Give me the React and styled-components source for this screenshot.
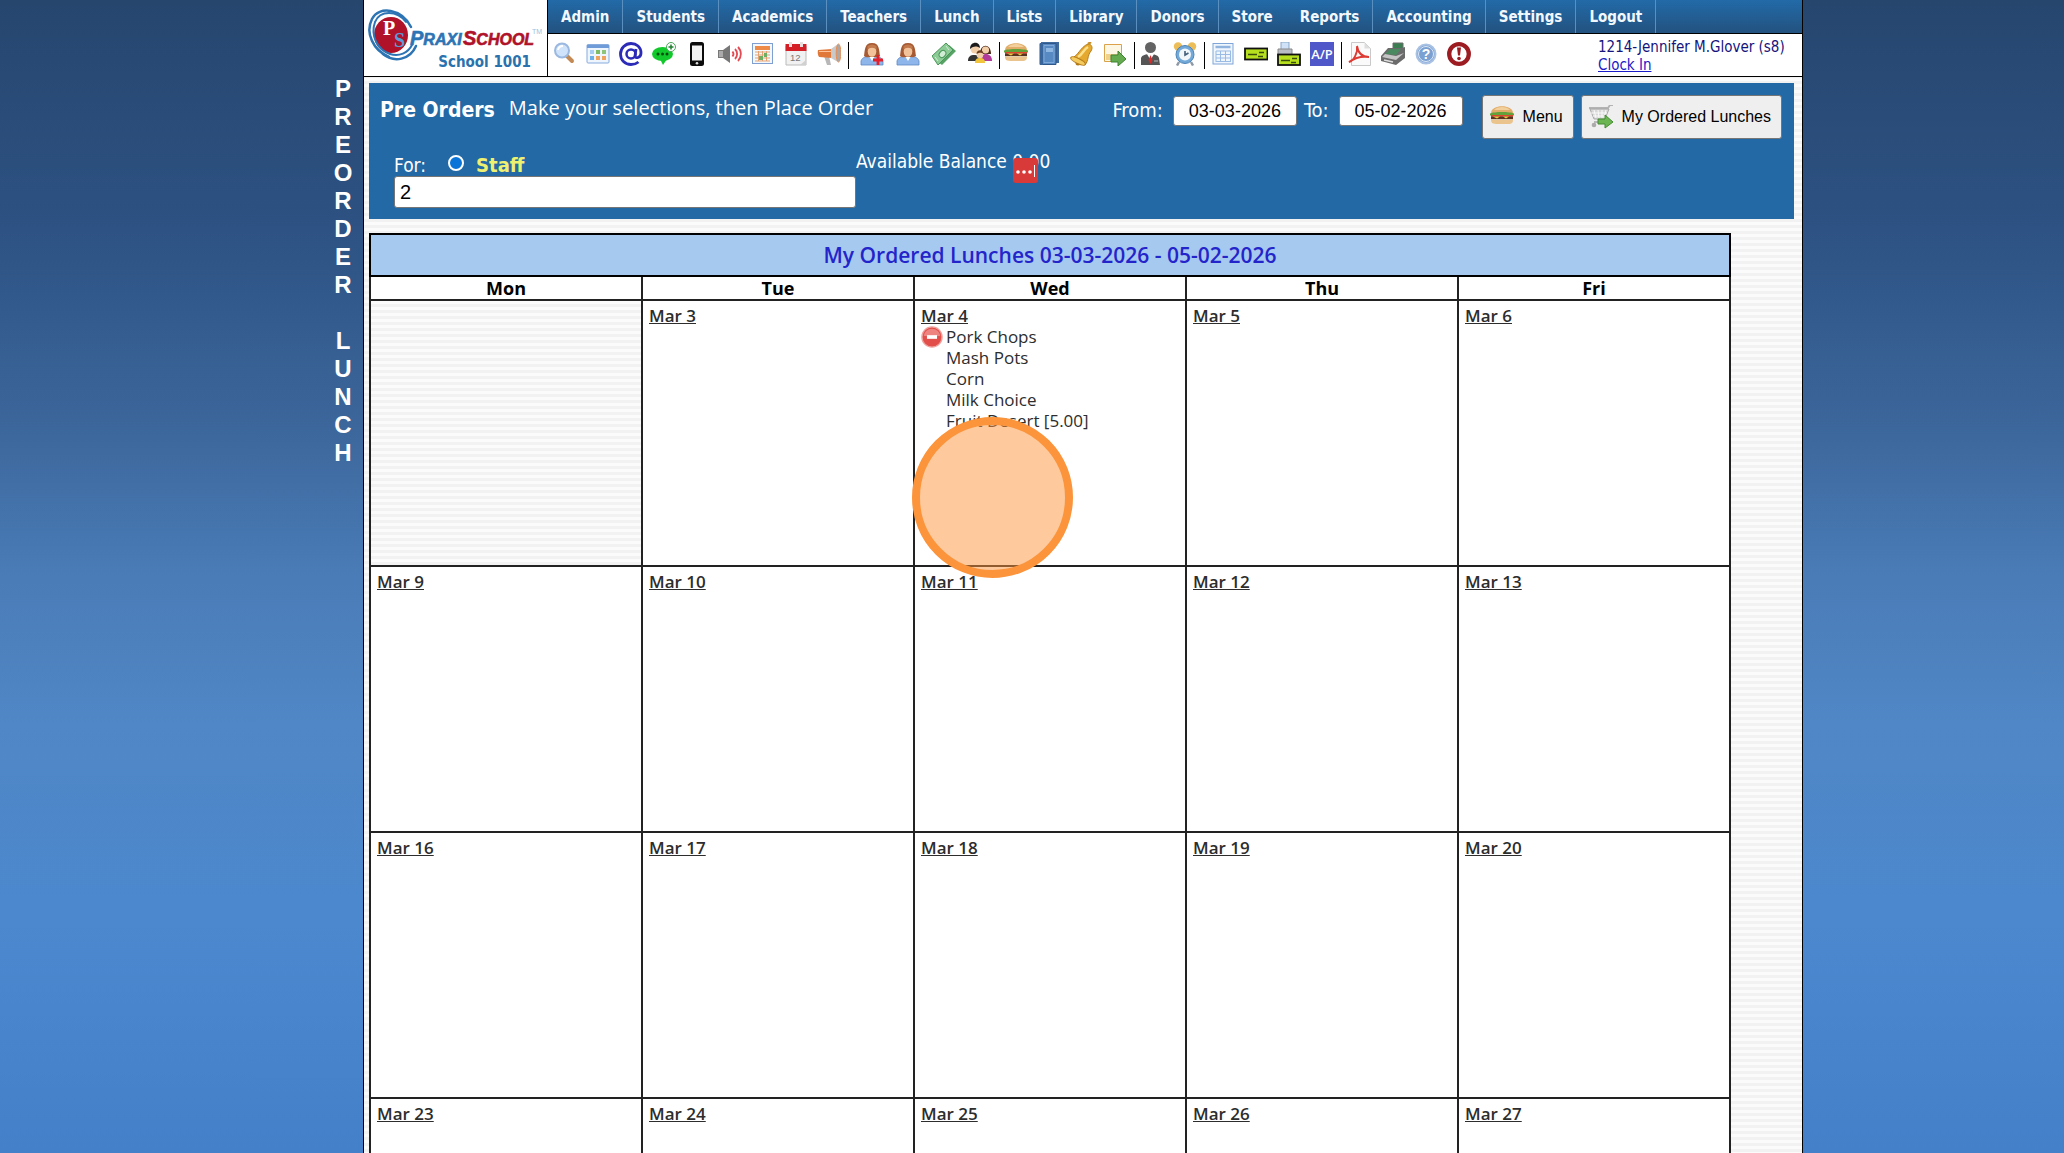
import styled, { createGlobalStyle, css } from "styled-components";

const tahoma = `"DejaVu Sans Condensed", Tahoma, sans-serif`;
const trebuchet = `"Open Sans", "Trebuchet MS", sans-serif`;
const arial = `"Liberation Sans", Arial, sans-serif`;

const stripes = css`
  background: repeating-linear-gradient(#fbfbfb 0 3px, #f2f2f2 3px 6px);
`;

const GlobalStyle = createGlobalStyle`
  *, *::before, *::after {
    box-sizing: border-box;
  }
  body {
    margin: 0;
    font-family: ${tahoma};
    color: #000;
  }
`;

const Backdrop = styled.div`
  height: 100vh;
  overflow-y: auto;
  scrollbar-width: none;
  background: linear-gradient(
    #26466e 0%,
    #2d5283 20%,
    #3d689d 38%,
    #4a7cb7 50%,
    #5087c6 63%,
    #4b88ce 80%,
    #4480c9 100%
  );
`;

const Shell = styled.div`
  display: flex;
  justify-content: center;
  max-width: 1542px;
  margin: 0 auto;
`;

const SideTitle = styled.h1`
  display: flex;
  flex: 0 0 102px;
  flex-direction: column;
  align-items: flex-end;
  margin: 0;
  padding: 75px 8px 0 0;
  font: bold 24px/28px ${arial};
  color: #fff;
`;

const Letter = styled.span`
  width: 24px;
  height: 28px;
  text-align: center;
`;

const Page = styled.div`
  flex: 1;
  min-width: 0;
  min-height: 100vh;
  border: solid #000;
  border-width: 0 1px;
  ${stripes}
`;

const Header = styled.header`
  display: flex;
  height: 77px;
  background: #fff;
  border-bottom: 1px solid #000;
`;

const Brand = styled.div`
  flex: 0 0 184px;
  padding: 8px 0 0 4px;
  border-right: 1px solid #000;
`;

const SchoolName = styled.div`
  padding-right: 16px;
  font: bold 15px/16px ${tahoma};
  color: #2a72ae;
  text-align: right;
`;

const HeaderMain = styled.div`
  flex: 1;
  min-width: 0;
`;

const Nav = styled.nav`
  display: flex;
  height: 34px;
  background: linear-gradient(#226aa8, #23527f);
  border-bottom: 1px solid #000;
`;

const NavItem = styled.a`
  padding: 0 13px;
  border-right: 1px solid ${(p) => (p.$open ? "transparent" : "#5b8fbf")};
  font: bold 15px/34px ${tahoma};
  color: #f2f8fd;
  text-decoration: none;
`;

const Toolbar = styled.div`
  display: flex;
  align-items: flex-start;
  height: 42px;
  padding: 8px 20px 0 0;
`;

const ToolGroup = styled.div`
  display: flex;
  gap: ${(p) => p.$gap || 9}px;
  height: 27px;
  padding: 0 7px 0 ${(p) => p.$lead || 6}px;
  border-right: 1px solid ${(p) => (p.$last ? "transparent" : "#000")};
`;

const ToolButton = styled.button`
  width: 24px;
  height: 24px;
  padding: 0;
  border: 0;
  background: none;

  svg {
    display: block;
  }
`;

const User = styled.div`
  margin-left: auto;
  width: 184px;
  margin-top: -4px;
  font: 15px/18px ${tahoma};
  color: #14147e;
  white-space: nowrap;
`;

const ClockIn = styled.a`
  color: #1a1ac8;
`;

const OrderPanel = styled.section`
  margin: 6px 8px 14px 5px;
  padding: 12px 12px 11px 11px;
  background: #2269a5;
  color: #fff;
`;

const PanelTop = styled.div`
  display: flex;
  align-items: flex-start;
  height: 56px;
`;

const PanelTitle = styled.h2`
  margin: 0 14px 0 0;
  font: bold 21px/30px ${tahoma};
`;

const Hint = styled.span`
  font: 20px/26px ${trebuchet};
`;

const Filters = styled.div`
  display: flex;
  margin-left: auto;
  gap: 7px;
  font: 20px/30px ${tahoma};

  label {
    display: flex;
    gap: 10px;
  }
`;

const DateInput = styled.input`
  width: 124px;
  height: 30px;
  margin-top: 1px;
  padding: 0;
  border: 1px solid #767676;
  border-radius: 3px;
  background: #fff;
  font: 18px ${arial};
  color: #000;
  text-align: center;
`;

const Actions = styled.div`
  display: flex;
  gap: 7px;
  margin-left: 19px;
`;

const ActionButton = styled.button`
  display: flex;
  align-items: center;
  gap: 9px;
  height: 44px;
  padding: 0 10px 0 7px;
  border: 1px solid #767676;
  border-radius: 3px;
  background: #efefef;
  font: 16px ${arial};
  color: #000;
`;

const PanelBottom = styled.div`
  display: flex;
  align-items: flex-start;
  padding-left: 14px;
`;

const Person = styled.div`
  width: 462px;
`;

const PersonType = styled.div`
  display: flex;
  align-items: flex-end;
  height: 25px;
  font: 19px/21px ${tahoma};
`;

const StaffRadio = styled.input`
  appearance: none;
  width: 16px;
  height: 16px;
  margin: 0 12px 5px 22px;
  border: 2px solid #fff;
  border-radius: 50%;
  background: #0a74d8;
`;

const StaffLabel = styled.label`
  font: bold 20px/21px ${tahoma};
  color: #eef070;
`;

const PersonInput = styled.input`
  display: block;
  width: 100%;
  height: 32px;
  padding: 0 5px;
  border: 1px solid #767676;
  border-radius: 3px;
  background: #fff;
  font: 20px ${arial};
  color: #000;
`;

const Balance = styled.div`
  position: relative;
  font: 19px/20px ${tahoma};
`;

const Badge = styled.span`
  position: absolute;
  right: 12px;
  top: 7px;
  display: flex;
  align-items: center;
  justify-content: center;
  width: 25px;
  height: 25px;
  border-radius: 3px;
  background: #d83a3a;
`;

const Calendar = styled.table`
  width: calc(100% - 76px);
  margin-left: 5px;
  border-collapse: collapse;
  table-layout: fixed;
  border: 2px solid #000;
`;

const Caption = styled.th`
  height: 42px;
  padding: 0;
  border-bottom: 2px solid #000;
  background: #a6c9ef;
  font: 600 21px/38px ${trebuchet};
  color: #2424cb;
`;

const Weekday = styled.th`
  height: 24px;
  padding: 0;
  border: 2px solid #222;
  background: #fff;
  font: bold 18px/20px ${trebuchet};
`;

const Day = styled.td`
  position: relative;
  height: 266px;
  padding: 4px 6px;
  border: 2px solid #222;
  vertical-align: top;
  font: 17px/21px ${trebuchet};
  color: #2d2d2d;
  ${(p) => (p.$blank ? stripes : "background: #fff;")}
`;

const DayLink = styled.a`
  display: block;
  width: fit-content;
  font-weight: 600;
  color: #2d2d2d;
`;

const Order = styled.div`
  display: flex;
  gap: 3px;
`;

const RemoveButton = styled.button`
  width: 22px;
  height: 22px;
  padding: 0;
  border: 0;
  background: none;
`;

const Dishes = styled.ul`
  margin: 0;
  padding: 0;
  list-style: none;
`;

const ClickMarker = styled.div`
  position: absolute;
  z-index: 1;
  left: -3px;
  top: 116px;
  width: 161px;
  height: 161px;
  border: 8px solid #fb943b;
  border-radius: 50%;
  background: rgba(251, 148, 59, 0.5);
`;

/* ---------- icons ---------- */

const Icon = ({ size = 24, children }) => (
  <svg width={size} height={size} viewBox="0 0 24 24" fill="none" aria-hidden="true">
    {children}
  </svg>
);

const SearchIcon = () => (
  <Icon>
    <path d="M14 14l5 5" stroke="#c48a56" strokeWidth="4" strokeLinecap="round" />
    <circle cx="9" cy="8.500" r="7" fill="#cfe3fa" stroke="#9bb9e0" strokeWidth="2" />
    <path d="M5 8a5 5 0 0 1 5-4" stroke="#fff" strokeWidth="2" />
  </Icon>
);

const AppsIcon = () => (
  <Icon>
    <rect x="1" y="2.500" width="22" height="18.500" rx="1" fill="#eef5fd" stroke="#86abdc" />
    <path d="M1 3h22v3H1z" fill="#6f9bd8" />
    <path d="M4 8h4v4H4z" fill="#a8cdf0" />
    <path d="M10 8h4v4h-4zM10 14h4v4h-4z" fill="#7dbb67" />
    <path d="M16 8h4v4h-4z" fill="#8fc57b" />
    <path d="M4 14h4v4H4z" fill="#6eaee6" />
    <path d="M10 14h4v4h-4zM16 14h4v4h-4z" fill="#f0a35c" />
  </Icon>
);

const AtIcon = () => (
  <Icon>
    <circle cx="12" cy="12" r="4.500" stroke="#2b2bb8" strokeWidth="2.500" />
    <path
      d="M17 7l-1 7c0 3 6 2 6-3C22 5 17.500 1.500 12 1.500S1.500 6 1.500 12 6 22.500 12 22.500c3 0 5.500-.8 7.500-2.500"
      stroke="#2b2bb8"
      strokeWidth="2.800"
    />
  </Icon>
);

const ChatIcon = () => (
  <Icon>
    <ellipse cx="10.500" cy="12" rx="10.500" ry="7" fill="#12c92c" />
    <path d="M8 17h7l-4 6z" fill="#12c92c" />
    <circle cx="6" cy="12" r="1.500" fill="#064d10" />
    <circle cx="10.500" cy="12" r="1.500" fill="#064d10" />
    <circle cx="15" cy="12" r="1.500" fill="#064d10" />
    <circle cx="19" cy="5" r="4.500" fill="#fff" stroke="#4aa65a" />
    <path d="M19 2.500v5M16.500 5h5" stroke="#1d7f2f" strokeWidth="1.500" />
  </Icon>
);

const PhoneIcon = () => (
  <Icon>
    <rect x="5" y="0" width="14" height="24" rx="2.500" fill="#0c0c0c" />
    <rect x="7" y="3.500" width="10" height="15" fill="#f3f3f3" />
    <circle cx="12" cy="21.300" r="1.300" fill="#ddd" />
  </Icon>
);

const SpeakerIcon = () => (
  <Icon>
    <path d="M0 8h5l7-5v18l-7-5H0z" fill="#777" />
    <path d="M1 9h4v6H1z" fill="#aaa" />
    <path d="M14.500 9.500a4 4 0 0 1 0 5M17 7a7 7 0 0 1 0 10M20 5a10 10 0 0 1 0 14" stroke="#e34a52" strokeWidth="1.800" />
  </Icon>
);

const ScheduleIcon = () => (
  <Icon>
    <rect x="1.500" y="1.500" width="20" height="20" fill="#f4f8fd" stroke="#7f9fd0" />
    <path d="M4 4h15v4H4z" fill="#ef8b49" />
    <path d="M4 10h15M4 13h15M4 16h15M4 19h15M7.500 9v10M11.500 9v10M15.500 9v10" stroke="#e3a26f" />
    <path d="M8 14h4v4H8zM13 11h3v4h-3z" fill="#6fae62" />
  </Icon>
);

const DateIcon = () => (
  <Icon>
    <path d="M2 4h20v19H2z" fill="#f1f1f1" stroke="#bbb" />
    <path d="M1.500 2h21v7h-21z" fill="#d51f26" />
    <path d="M5 0h3v5H5zM16 0h3v5h-3z" fill="#e8dede" />
    <text x="6" y="19" fontFamily="Liberation Sans" fontSize="9.500" fill="#777">12</text>
    <path d="M16 23l6-5v5z" fill="#d0d0d0" />
  </Icon>
);

const MegaphoneIcon = () => (
  <Icon>
    <path d="M7 14h5l2 9h-4z" fill="#b8b8b8" />
    <path d="M1 8l14-1v9L2 15c-1.500-2-1.500-5-1-7z" fill="#e0783a" />
    <path d="M14 7l7-5v18l-7-4z" fill="#c9c9c9" />
    <ellipse cx="21.500" cy="11" rx="2.300" ry="9" fill="#a9a9a9" stroke="#eb8c50" />
    <path d="M2 9.500h12" stroke="#ffc49a" />
  </Icon>
);

const NurseIcon = ({ plus }) => (
  <Icon>
    <path d="M1 23v-4c1-4 6-5 11-5s10 1 11 5v4z" fill="#8eb6ea" stroke="#5f88c4" strokeWidth=".8" />
    <path d="M9 14l3 5 3-5z" fill="#fff" />
    <path d="M4 14C5 9 4 1 12 1s7 8 8 13c-3 2-5 1-5 1H9s-3 1-5-1z" fill="#a65a33" />
    <ellipse cx="12" cy="9.500" rx="4.300" ry="5.300" fill="#f2c39b" />
    <path d="M7.500 8c2-3 7-3 9 0V4c-3-2-6-2-9 0z" fill="#c27a4d" />
    {plus && <path d="M18 13v10M13 18h10" stroke="#e3202c" strokeWidth="2.800" />}
  </Icon>
);

const MoneyIcon = () => (
  <Icon>
    <path d="M2 17L17 3l7 6-14 14z" fill="#56a365" />
    <path d="M0 14L14 1l7 7L6 23z" fill="#8ccb96" stroke="#4a9659" />
    <ellipse cx="10.500" cy="12" rx="3" ry="3.800" transform="rotate(40 10.500 12)" fill="#d2edd5" stroke="#4a9659" />
    <path d="M3 15l3 4M14 4l3 4" stroke="#d2edd5" />
  </Icon>
);

const FamilyIcon = () => (
  <Icon>
    <path d="M0 19c0-5 3-6 6-6s7 1 7 6z" fill="#333" />
    <path d="M12 19c0-5 3-7 6-7s6 2 6 7z" fill="#b13a9b" />
    <circle cx="7" cy="7" r="4.500" fill="#f3cfa9" />
    <path d="M2 7c0-8 10-8 10-1-4-2-6-2-10 1z" fill="#1c1c1c" />
    <path d="M12 12c0-11 11-11 11 0z" fill="#4d2b1c" />
    <circle cx="17.500" cy="8" r="3.600" fill="#f3cfa9" />
    <path d="M7 21c0-4 2-5 5-5s5 1 5 5z" fill="#f0c43b" />
    <circle cx="12" cy="13" r="3.300" fill="#f3cfa9" />
    <path d="M8.500 12c0-5 7-5 7 0-3-2-4-1-7 0z" fill="#6b3c1f" />
  </Icon>
);

const BurgerIcon = () => (
  <Icon>
    <path d="M1 8c0-9 22-9 22 0z" fill="#e2ad6a" />
    <path d="M4 5c3-4 13-4 16 0z" fill="#f2cf9b" />
    <path d="M0 8.500c4-2 20-2 24 0v2H0z" fill="#63a13a" />
    <path d="M1 10h22v1.800H1z" fill="#e0452d" />
    <path d="M1 11.500h22v2.700H1z" fill="#59351f" />
    <path d="M3 11.500h7l-3 2zM13 11.500h6l-3 2z" fill="#f0c63c" />
    <path d="M1 14.500h22c0 5-2 4.500-11 4.500S1 19 1 14.500z" fill="#eac48c" />
  </Icon>
);

const BookIcon = () => (
  <Icon>
    <path d="M4 0h18v21H4z" fill="#3f6b9f" />
    <path d="M3 1.500h16v21H3z" fill="#5789c2" stroke="#2f578a" />
    <path d="M3 1h3v22H3z" fill="#38669c" />
    <path d="M9 6h7v4H9z" fill="#8db6e3" />
    <path d="M7 3.500h10v17H7z" stroke="#86b0de" strokeWidth=".8" />
  </Icon>
);

const BellIcon = () => (
  <Icon>
    <circle cx="8" cy="21" r="2.500" fill="#b17714" />
    <path d="M1 16C8 15 10 5 18 2c4 0 5 4 3 7-4 5-2 9-6 14z" fill="#e5a92f" stroke="#b67d1b" />
    <path d="M8 15c5-3 5-7 10-10" stroke="#fbe08c" strokeWidth="2.500" />
    <ellipse cx="8" cy="19" rx="8" ry="2.500" transform="rotate(26 8 19)" fill="#f3ca5e" stroke="#b67d1b" />
    <path d="M18 2l3-2" stroke="#c58f2b" strokeWidth="2.500" />
  </Icon>
);

const NoteOutIcon = () => (
  <Icon>
    <path d="M1.500 2.500h17v17h-17z" fill="#fdf6e2" stroke="#dba24a" />
    <path d="M3 12h14v6H3z" fill="#f1d089" />
    <path d="M8 13h7V9l8 8-8 7v-4H8z" fill="#63ab4e" stroke="#3f8132" />
  </Icon>
);

const ManIcon = () => (
  <Icon>
    <path d="M1 23v-7c1-3 5-4 9-4s8 1 9 4l1 7z" fill="#555" />
    <path d="M7 12l3.500 6 3.500-6z" fill="#fff" />
    <path d="M10.500 13l2 5-2 4-2-4z" fill="#d92c2c" />
    <circle cx="10.500" cy="5.500" r="5.500" fill="#636363" />
    <path d="M14 19h4" stroke="#bbb" />
  </Icon>
);

const AlarmIcon = () => (
  <Icon>
    <circle cx="5" cy="4.500" r="4.200" fill="#edbd58" />
    <circle cx="19" cy="4.500" r="4.200" fill="#edbd58" />
    <path d="M6 20l-2 3.500M18 20l2 3.500" stroke="#8d99a6" strokeWidth="2.500" />
    <circle cx="12" cy="12.500" r="9" fill="#72a9d8" stroke="#4a83b8" />
    <circle cx="12" cy="12.500" r="6" fill="#f1f6fb" />
    <path d="M12 9v4l3.500-2" stroke="#43607b" strokeWidth="1.600" />
  </Icon>
);

const SheetIcon = () => (
  <Icon>
    <rect x="2" y="1.500" width="20" height="20.500" fill="#eff6fd" stroke="#7fa5d6" />
    <path d="M4.500 5h15" stroke="#91b4df" strokeWidth="2.500" />
    <path d="M5 9h15M5 12.500h15M5 16h15M5 19.500h15M5 9v11M9.500 9v11M14.500 9v11M19.500 9v11" stroke="#9abbe3" />
  </Icon>
);

const CheckIcon = () => (
  <Icon>
    <rect x="1" y="6.500" width="22.500" height="11" fill="#b6e01e" stroke="#111" strokeWidth="1.800" />
    <path d="M4 12.500h9M15 10.500h5M14 14.500h5" stroke="#3c4c0c" strokeWidth="1.400" />
  </Icon>
);

const PrintCheckIcon = () => (
  <Icon>
    <path d="M4 0h8v8H4z" fill="#cfe2f7" stroke="#8aa7c8" />
    <path d="M1 7h14v8H1z" fill="#b8bdc5" stroke="#888" />
    <rect x="1" y="12.500" width="22" height="10.500" fill="#b6e01e" stroke="#111" strokeWidth="1.800" />
    <path d="M4 18.500h9M15 16.500h5M14 20.500h5" stroke="#3c4c0c" strokeWidth="1.400" />
  </Icon>
);

const PayableIcon = () => (
  <Icon>
    <path d="M0 0h24v24H0z" fill="#4f57c9" />
    <text x="12" y="17" textAnchor="middle" fontFamily="Open Sans" fontSize="13" fontWeight="600" fill="#fff">A/P</text>
  </Icon>
);

const PdfIcon = () => (
  <Icon>
    <path d="M3.500 .5h13l6 6v17h-19z" fill="#fafafa" stroke="#c9c9c9" />
    <path d="M16.500 .5v6h6z" fill="#ddd" />
    <path d="M1 20c5-1 9-10 8-16 1 7 5 11 12 11-7-1-13 0-20 5z" stroke="#dc3b33" strokeWidth="1.900" />
  </Icon>
);

const RegisterIcon = () => (
  <Icon>
    <path d="M12 1h10v6H12z" fill="#3a7e52" stroke="#6d6d6d" />
    <path d="M0 14L7 6h14l3-1v11l-9 7-15-4z" fill="#6b6b6b" />
    <path d="M4 12l5-5h11l-5 6z" fill="#4b8a60" />
    <path d="M1 15l14 3 8-7-8 3-11-2z" fill="#c5c5c5" />
    <path d="M3 18l9 2" stroke="#ddd" strokeWidth="1.500" />
  </Icon>
);

const HelpIcon = () => (
  <Icon>
    <circle cx="12" cy="12" r="9.500" fill="#7ba0d2" stroke="#a9c2e3" strokeWidth="2" />
    <circle cx="12" cy="12" r="7.500" stroke="#dbe7f6" />
    <text x="12" y="17" textAnchor="middle" fontFamily="Liberation Sans" fontSize="14" fontWeight="bold" fill="#fff">?</text>
  </Icon>
);

const AlertIcon = () => (
  <Icon>
    <circle cx="12" cy="12" r="9.800" fill="#fff" stroke="#9c1c22" strokeWidth="4.300" />
    <path d="M10 5.500h4l-1 8h-2z" fill="#9c1c22" />
    <circle cx="12" cy="16.500" r="1.800" fill="#9c1c22" />
  </Icon>
);

const CartIcon = () => (
  <Icon>
    <path d="M0 3h19l2-3h3" stroke="#b3b3b3" strokeWidth="1.800" />
    <path d="M1 4h19l-4 10H5z" fill="#d8d8d8" stroke="#a9a9a9" />
    <path d="M5 5l2 8M9 5l1 8M13 5v8M17 5l-2 8M2 8h16M4 11h13" stroke="#fafafa" />
    <path d="M5 17h11" stroke="#b0b0b0" strokeWidth="1.800" />
    <circle cx="5" cy="20" r="2.300" fill="#aaa" />
    <path d="M9 14h7v-4l8 7-8 6v-4H9z" fill="#6bb552" stroke="#458c35" />
  </Icon>
);

const RemoveIcon = () => (
  <Icon size={22}>
    <circle cx="12" cy="12" r="11" fill="#e24f4b" stroke="#f0a09c" strokeWidth="1.500" />
    <path d="M3 11a9 8 0 0 1 18 0z" fill="#ee8480" />
    <path d="M6.500 10h11v4h-11z" fill="#fff" />
  </Icon>
);

const LogoSvg = styled.svg`
  display: block;
`;

const Logo = () => (
  <LogoSvg width="176" height="46" viewBox="0 0 176 46" overflow="visible" role="img" aria-label="PraxiSchool">
    <ellipse cx="23" cy="27" rx="17" ry="18" fill="#b01229" />
    <g fill="none" stroke="#2d74b4" strokeLinecap="round">
      <path d="M43 19C34 1 11-3 4 11c-7 14 1 31 17 38" strokeWidth="2.500" />
      <path d="M38 14C29 2 12 2 7 14c-5 14 3 28 15 32 9 3 18-1 22-9" strokeWidth="2" />
      <path d="M15 46c11 9 27 6 33-8" strokeWidth="2.500" />
    </g>
    <g fontFamily="Liberation Serif" fontWeight="bold" fontSize="20">
      <text x="15" y="27" fill="#fff">P</text>
      <text x="26" y="39" fill="#5b9bd6">S</text>
    </g>
    <g fontFamily="Liberation Sans" fontWeight="bold" fontStyle="italic" strokeWidth=".6">
      <text y="37" fill="#2d74b4" stroke="#2d74b4">
        <tspan x="42" fontSize="20">P</tspan>
        <tspan fontSize="16">RAXI</tspan>
      </text>
      <text x="95" y="37" fill="#b01229" stroke="#b01229">
        <tspan fontSize="20">S</tspan>
        <tspan fontSize="16">CHOOL</tspan>
      </text>
    </g>
    <text x="164" y="26" fontFamily="Liberation Sans" fontSize="7" fill="#9dbfdd">TM</text>
  </LogoSvg>
);

/* ---------- data ---------- */

const menu = [
  "Admin", "Students", "Academics", "Teachers", "Lunch", "Lists", "Library",
  "Donors", "Store", "Reports", "Accounting", "Settings", "Logout",
];

const toolGroups = [
  {
    lead: 5,
    tools: [
      ["Search", <SearchIcon />],
      ["Dashboard", <AppsIcon />],
      ["Email", <AtIcon />],
      ["Message", <ChatIcon />],
      ["Phone", <PhoneIcon />],
      ["Announce", <SpeakerIcon />],
      ["Schedule", <ScheduleIcon />],
      ["Calendar", <DateIcon />],
      ["News", <MegaphoneIcon />],
    ],
  },
  {
    lead: 11,
    gap: 12,
    tools: [
      ["Add nurse visit", <NurseIcon plus />],
      ["Nurse", <NurseIcon />],
      ["Payments", <MoneyIcon />],
      ["Families", <FamilyIcon />],
    ],
  },
  {
    lead: 4,
    tools: [
      ["Lunch", <BurgerIcon />],
      ["Grade book", <BookIcon />],
      ["Bell", <BellIcon />],
      ["Send note", <NoteOutIcon />],
    ],
  },
  {
    lead: 5,
    tools: [
      ["Staff", <ManIcon />],
      ["Time clock", <AlarmIcon />],
    ],
  },
  {
    tools: [
      ["Ledger", <SheetIcon />],
      ["Checks", <CheckIcon />],
      ["Print checks", <PrintCheckIcon />],
      ["Accounts payable", <PayableIcon />],
    ],
  },
  {
    tools: [
      ["PDF", <PdfIcon />],
      ["Register", <RegisterIcon />],
      ["Help", <HelpIcon />],
      ["Alerts", <AlertIcon />],
    ],
  },
];

const weekdays = ["Mon", "Tue", "Wed", "Thu", "Fri"];

const weeks = [
  [null, "Mar 3", "Mar 4", "Mar 5", "Mar 6"],
  ["Mar 9", "Mar 10", "Mar 11", "Mar 12", "Mar 13"],
  ["Mar 16", "Mar 17", "Mar 18", "Mar 19", "Mar 20"],
  ["Mar 23", "Mar 24", "Mar 25", "Mar 26", "Mar 27"],
];

const orders = {
  "Mar 4": ["Pork Chops", "Mash Pots", "Corn", "Milk Choice", "Fruit Desert [5.00]"],
};

function DayCell({ day }) {
  if (!day) return <Day $blank />;
  const dishes = orders[day];
  return (
    <Day>
      <DayLink href="#">{day}</DayLink>
      {dishes && (
        <>
          <Order>
            <RemoveButton aria-label="Remove order">
              <RemoveIcon />
            </RemoveButton>
            <Dishes>
              {dishes.map((dish) => (
                <li key={dish}>{dish}</li>
              ))}
            </Dishes>
          </Order>
          <ClickMarker />
        </>
      )}
    </Day>
  );
}

export default function App() {
  return (
    <Backdrop>
      <GlobalStyle />
      <Shell>
        <SideTitle aria-label="Preorder Lunch">
          {[..."PREORDER LUNCH"].map((letter, i) => (
            <Letter key={i}>{letter}</Letter>
          ))}
        </SideTitle>
        <Page>
          <Header>
            <Brand>
              <Logo />
              <SchoolName>School 1001</SchoolName>
            </Brand>
            <HeaderMain>
              <Nav>
                {menu.map((item) => (
                  <NavItem key={item} href="#" $open={item === "Store"}>
                    {item}
                  </NavItem>
                ))}
              </Nav>
              <Toolbar>
                {toolGroups.map((group, i) => (
                  <ToolGroup
                    key={i}
                    $lead={group.lead}
                    $gap={group.gap}
                    $last={i === toolGroups.length - 1}
                  >
                    {group.tools.map(([label, icon]) => (
                      <ToolButton key={label} aria-label={label}>
                        {icon}
                      </ToolButton>
                    ))}
                  </ToolGroup>
                ))}
                <User>
                  1214-Jennifer M.Glover (s8)
                  <br />
                  <ClockIn href="#">Clock In</ClockIn>
                </User>
              </Toolbar>
            </HeaderMain>
          </Header>

          <OrderPanel>
            <PanelTop>
              <PanelTitle>Pre Orders</PanelTitle>
              <Hint>Make your selections, then Place Order</Hint>
              <Filters>
                <label>
                  From: <DateInput defaultValue="03-03-2026" />
                </label>
                <label>
                  To: <DateInput defaultValue="05-02-2026" />
                </label>
              </Filters>
              <Actions>
                <ActionButton>
                  <BurgerIcon />
                  Menu
                </ActionButton>
                <ActionButton>
                  <CartIcon />
                  My Ordered Lunches
                </ActionButton>
              </Actions>
            </PanelTop>
            <PanelBottom>
              <Person>
                <PersonType>
                  For:
                  <StaffRadio type="radio" id="staff" name="person" />
                  <StaffLabel htmlFor="staff">Staff</StaffLabel>
                </PersonType>
                <PersonInput aria-label="Person" defaultValue="2" />
              </Person>
              <Balance>
                Available Balance 0.00
                <Badge>
                  <svg width="21" height="14" viewBox="0 0 21 14" fill="#fff">
                    <circle cx="3" cy="8" r="1.800" />
                    <circle cx="9" cy="8" r="1.800" />
                    <circle cx="15" cy="8" r="1.800" />
                    <path d="M19 1h1v12h-1z" />
                  </svg>
                </Badge>
              </Balance>
            </PanelBottom>
          </OrderPanel>

          <Calendar>
            <thead>
              <tr>
                <Caption colSpan={5}>My Ordered Lunches 03-03-2026 - 05-02-2026</Caption>
              </tr>
              <tr>
                {weekdays.map((name) => (
                  <Weekday key={name}>{name}</Weekday>
                ))}
              </tr>
            </thead>
            <tbody>
              {weeks.map((week, i) => (
                <tr key={i}>
                  {week.map((day, j) => (
                    <DayCell key={j} day={day} />
                  ))}
                </tr>
              ))}
            </tbody>
          </Calendar>
        </Page>
      </Shell>
    </Backdrop>
  );
}
